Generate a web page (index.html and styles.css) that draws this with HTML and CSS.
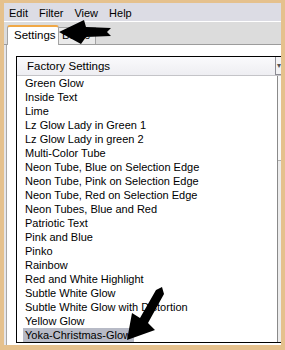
FILE: index.html
```html
<!DOCTYPE html>
<html lang="en">
<head>
    <meta charset="UTF-8">
    <title>Settings</title>
    <link rel="stylesheet" href="styles.css">
</head>
<body>
    <div class="window">
        <div class="menubar">
            <span>Edit</span>
            <span>Filter</span>
            <span>View</span>
            <span>Help</span>
        </div>
        <div class="tabstrip">
            <div class="tab tab-active">Settings</div>
            <div class="tab">Basic</div>
        </div>
        <div class="panel">
            <div class="listbox">
                <div class="lb-head">
                    <span class="lb-title">Factory Settings</span>
                    <span class="lb-drop">&#9662;</span>
                </div>
                <div class="lb-body">
                    <ul class="items">
                        <li>Green Glow</li>
                        <li>Inside Text</li>
                        <li>Lime</li>
                        <li>Lz Glow Lady in Green 1</li>
                        <li>Lz Glow Lady in green 2</li>
                        <li>Multi-Color Tube</li>
                        <li>Neon Tube, Blue on Selection Edge</li>
                        <li>Neon Tube, Pink on Selection Edge</li>
                        <li>Neon Tube, Red on Selection Edge</li>
                        <li>Neon Tubes, Blue and Red</li>
                        <li>Patriotic Text</li>
                        <li>Pink and Blue</li>
                        <li>Pinko</li>
                        <li>Rainbow</li>
                        <li>Red and White Highlight</li>
                        <li>Subtle White Glow</li>
                        <li>Subtle White Glow with Distortion</li>
                        <li>Yellow Glow</li>
                        <li><span class="selected">Yoka-Christmas-Glow</span></li>
                    </ul>
                    <div class="scrollbar">
                        <div class="thumb"></div>
                    </div>
                </div>
            </div>
        </div>
    </div>

    <!-- pointer arrows drawn over the screenshot -->
    <svg class="arrows" width="285" height="350" viewBox="0 0 285 350">
        <path d="M59 32 L84 20 L86 27 L111 28 L107 32 L111 36 L86 37 L81 44 Z" fill="#000"/>
        <path d="M127 340 L132 313 L140 318 L156 290 L162 287 L164 294 L148 323 L155 330 Z" fill="#000"/>
    </svg>
</body>
</html>
```

FILE: styles.css
```css
body{
    margin: 0;
    width: 285px;
    height: 350px;
    box-sizing: border-box;
    padding: 3px 4px 5px 4px;
    background: #e5c18d;
    font-family: "Liberation Sans", Arial, sans-serif;
    font-size: 11px;
    color: #000;
    overflow: hidden;
}
.window{
    width: 277px;
    height: 342px;
    overflow: hidden;
    display: flex;
    flex-direction: column;
    background: #dcdcde;
}
.menubar{
    height: 19px;
    flex: none;
    display: flex;
    align-items: center;
    gap: 11px;
    padding-left: 5px;
    padding-top: 1px;
    box-sizing: border-box;
    background: #dcdce4;
    border-bottom: 1px solid #fff;
    font-size: 11px;
}
.tabstrip{
    height: 23px;
    flex: none;
    display: flex;
    align-items: flex-end;
    padding-left: 3px;
    box-sizing: border-box;
    border-bottom: 1px solid #9c9c9c;
    background: #dcdcdc;
}
.tab{
    height: 17px;
    width: 37px;
    box-sizing: border-box;
    padding-left: 3px;
    line-height: 15px;
    font-size: 11.5px;
    background: #eaeaea;
    border: 1px solid #a4a4a4;
    border-bottom: none;
    border-left: none;
}
.tab-active{
    width: 52px;
    height: 20px;
    margin-bottom: -1px;
    padding-left: 6px;
    line-height: 17px;
    background: #fff;
    border: 1px solid #a4a4a4;
    border-top: 2px solid #f0a846;
    border-bottom: none;
    border-radius: 3px 3px 0 0;
}
.panel{
    flex: 1;
    background: #fff;
    border-left: 2px solid #e6e6ea;
    box-shadow: inset 1px 0 0 #a8a8a8;
    padding: 11px 0 0 10px;
}
.listbox{
    width: 278px;
    height: 287px;
    box-sizing: border-box;
    border: 1px solid #000;
    border-right: none;
    overflow: hidden;
    display: flex;
    flex-direction: column;
}
.lb-head{
    height: 19px;
    flex: none;
    display: flex;
    box-sizing: border-box;
    border-bottom: 1px solid #c4c4c8;
    background: linear-gradient(#fafafc, #eeeef2);
}
.lb-title{
    flex: 1;
    padding-left: 10px;
    padding-top: 3px;
    font-size: 11.5px;
}
.lb-drop{
    width: 16px;
    border: 1px solid #8c8c94;
    border-top: none;
    background: #f2f2f4;
    font-size: 8px;
    line-height: 17px;
    padding-left: 1px;
    color: #555;
}
.lb-body{
    flex: 1;
    display: flex;
    min-height: 0;
}
.items{
    list-style: none;
    margin: 0;
    padding: 0 0 0 6px;
    width: 254px;
    flex: none;
}
.items li{
    height: 14px;
    line-height: 14px;
    white-space: nowrap;
    padding-left: 2px;
}
.selected{
    background: #b7bac6;
    margin-left: -2px;
    padding: 1px 3px 1px 2px;
}
.scrollbar{
    flex: 1;
    border-left: 1px solid #8a8a8a;
    background: #ececec;
}
.thumb{
    height: 84px;
    background: #f8f8f8;
    border-bottom: 1px solid #b0b0b0;
}
.arrows{
    position: absolute;
    left: 0;
    top: 0;
}
```
